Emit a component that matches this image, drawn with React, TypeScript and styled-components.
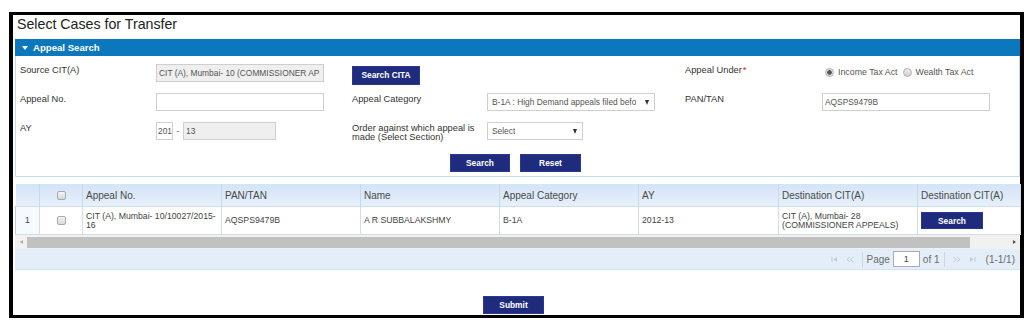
import React from "react";
import styled, { createGlobalStyle } from "styled-components";

const GlobalStyle = createGlobalStyle`
  html, body {
    margin: 0;
    padding: 0;
    background: #fff;
  }
  body {
    font-family: "Liberation Sans", Arial, sans-serif;
  }
`;

const Frame = styled.div`
  box-sizing: border-box;
  margin: 12px 0 0 9px;
  width: 1015px;
  height: 306px;
  border: solid #000;
  border-width: 3px 4px;
  padding-left: 2px;
  display: flex;
  flex-direction: column;
`;

const Title = styled.h1`
  box-sizing: border-box;
  margin: 0;
  height: 24px;
  padding: 1px 0 0 2px;
  font-size: 14.2px;
  line-height: 16px;
  font-weight: normal;
  color: #222;
`;

const Panel = styled.section`
  display: flex;
  flex-direction: column;
`;

const PanelHeader = styled.div`
  height: 17px;
  background: #0b78bd;
  display: flex;
  align-items: center;
  gap: 5px;
  padding-left: 7px;
  color: #fff;
  font-size: 9.6px;
  font-weight: bold;
`;

const Caret = styled.span`
  width: 0;
  height: 0;
  border-left: 3.5px solid transparent;
  border-right: 3.5px solid transparent;
  border-top: 4px solid #fff;
`;

const PanelBody = styled.div`
  border: 1px solid #c3d9ee;
  border-top: none;
  padding: 8px 4px 4px;
`;

const FormGrid = styled.div`
  display: grid;
  grid-template-columns: 136px 196px 135px 198px 137px 1fr;
  grid-auto-rows: 18px;
  row-gap: 11px;
  align-items: start;
`;

const Label = styled.div`
  padding-top: 2px;
  font-size: 9.3px;
  line-height: 9px;
  color: #333;
`;

const Req = styled.span`
  color: #d42020;
  margin-left: 1px;
`;

const Field = styled.div<{ $w: number; $disabled?: boolean }>`
  box-sizing: border-box;
  width: ${(p) => p.$w}px;
  height: 18px;
  border: 1px solid #cfcfcf;
  background: ${(p) => (p.$disabled ? "#efefef" : "#fff")};
  padding: 0 0 0 2px;
  font-size: 8.4px;
  line-height: 16px;
  color: #555;
  white-space: nowrap;
  overflow: hidden;
`;

const YearField = styled(Field)`
  padding-left: 1px;
`;

const SelectBox = styled(Field)`
  display: flex;
  align-items: center;
  justify-content: space-between;
  gap: 4px;
  padding: 0 4px;
`;

const SelectText = styled.span`
  overflow: hidden;
`;

const Arrow = styled.span`
  flex: none;
  width: 0;
  height: 0;
  border-left: 2.5px solid transparent;
  border-right: 2.5px solid transparent;
  border-top: 5px solid #333;
  margin-right: 1px;
`;

const YearPair = styled.div`
  display: flex;
  align-items: center;
  font-size: 9px;
  color: #555;
`;

const Dash = styled.span`
  width: 10px;
  text-align: center;
`;

const Button = styled.button<{ $w: number; $h?: number }>`
  box-sizing: border-box;
  width: ${(p) => p.$w}px;
  height: ${(p) => p.$h ?? 18}px;
  padding: 0;
  border: 1px solid #2c3a8e;
  background: #1f2c7d;
  color: #fff;
  font-family: "Liberation Sans", Arial, sans-serif;
  font-size: 8.4px;
  font-weight: bold;
  cursor: pointer;
`;

const CitaButton = styled(Button)`
  margin-top: 1px;
`;

const RadioGroup = styled.div`
  display: flex;
  align-items: center;
  padding: 3px 0 0 3px;
  font-size: 8.8px;
  color: #555;
`;

const RadioItem = styled.label`
  display: flex;
  align-items: center;
  gap: 4px;
  margin-right: 5px;
`;

const RadioDot = styled.span<{ $on?: boolean }>`
  box-sizing: border-box;
  width: 9px;
  height: 9px;
  border-radius: 50%;
  border: 1px solid #b0b0b0;
  background: ${(p) =>
    p.$on
      ? "radial-gradient(circle, #555 0 2px, #ddd 2.5px)"
      : "linear-gradient(#eee, #d0d0d0)"};
`;

const ButtonRow = styled.div`
  display: flex;
  justify-content: center;
  gap: 10px;
  margin-top: 14px;
  padding-right: 4px;
`;

const GridTable = styled.table`
  margin-top: 7px;
  width: 1005px;
  table-layout: fixed;
  border-collapse: collapse;
  font-size: 8.7px;
  color: #444;
`;

const Col = styled.col<{ $w: number }>`
  width: ${(p) => p.$w}px;
`;

const HeadCell = styled.th`
  height: 22px;
  padding: 0 3px;
  background: linear-gradient(#d3e4f6, #e6f0fb);
  border-right: 1px solid #c6d9ee;
  font-size: 10px;
  font-weight: normal;
  color: #4a4a4a;
  text-align: left;
  white-space: nowrap;
  overflow: hidden;
`;

const CenterHead = styled(HeadCell)`
  text-align: center;
  padding: 0;
`;

const Cell = styled.td`
  height: 27px;
  padding: 0 3px;
  border: 1px solid #d3dde8;
  line-height: 8.5px;
  vertical-align: middle;
  overflow: hidden;
`;

const NumCell = styled(Cell)`
  text-align: center;
  background: #f6f9fd;
  border-left-color: #b9cfe6;
`;

const CenterCell = styled(Cell)`
  text-align: center;
`;

const Check = styled.span`
  display: inline-block;
  box-sizing: border-box;
  width: 9px;
  height: 9px;
  border: 1px solid #aaa;
  border-radius: 2px;
  background: linear-gradient(#f4f4f4, #d8d8d8);
  vertical-align: middle;
`;

const ScrollBar = styled.div`
  width: 1005px;
  height: 14px;
  background: #f1f1f1;
  display: flex;
  align-items: center;
`;

const ScrollArrow = styled.span<{ $left?: boolean }>`
  width: 12px;
  display: flex;
  justify-content: center;
  &::before {
    content: "";
    border-top: 2.5px solid transparent;
    border-bottom: 2.5px solid transparent;
    ${(p) =>
      p.$left ? "border-right: 3px solid #aaa;" : "border-left: 3px solid #555;"}
  }
`;

const Thumb = styled.span`
  width: 943px;
  height: 11px;
  background: #c1c1c1;
`;

const Track = styled.span`
  flex: 1;
`;

const Pager = styled.div`
  box-sizing: border-box;
  width: 1005px;
  height: 21px;
  background: #e3eef9;
  border-bottom: 1px solid #d2e2f2;
  display: flex;
  justify-content: flex-end;
  align-items: center;
  padding-right: 5px;
  font-size: 10px;
  color: #6a6a6a;
`;

const PagerIcon = styled.svg`
  margin: 0 4px;
`;

const Sep = styled.span`
  width: 1px;
  height: 15px;
  background: #c9d8e8;
  margin: 0 4px;
`;

const PageInput = styled.span`
  box-sizing: border-box;
  width: 27px;
  height: 16px;
  margin: 0 3px;
  border: 1px solid #aab;
  background: #fff;
  text-align: center;
  line-height: 14px;
  font-size: 9px;
  color: #444;
`;

const Total = styled.span`
  margin-left: 6px;
`;

const SubmitRow = styled.div`
  display: flex;
  justify-content: center;
  margin-top: 26px;
  padding-right: 8px;
`;

const First = () => (
  <PagerIcon width="7" height="7" viewBox="0 0 7 7">
    <rect x="0.5" y="1" width="1" height="5" fill="#c3cbd6" />
    <path d="M6 1 L2.5 3.5 L6 6 Z" fill="#c3cbd6" />
  </PagerIcon>
);

const Prev = () => (
  <PagerIcon width="8" height="7" viewBox="0 0 8 7">
    <path d="M4 1 L1 3.5 L4 6 M7.5 1 L4.5 3.5 L7.5 6" stroke="#c3cbd6" fill="none" />
  </PagerIcon>
);

const Next = () => (
  <PagerIcon width="8" height="7" viewBox="0 0 8 7">
    <path d="M0.5 1 L3.5 3.5 L0.5 6 M4 1 L7 3.5 L4 6" stroke="#c3cbd6" fill="none" />
  </PagerIcon>
);

const Last = () => (
  <PagerIcon width="7" height="7" viewBox="0 0 7 7">
    <path d="M1 1 L4.5 3.5 L1 6 Z" fill="#c3cbd6" />
    <rect x="5.5" y="1" width="1" height="5" fill="#c3cbd6" />
  </PagerIcon>
);

const columns = [24, 43, 139, 139, 139, 139, 140, 139, 103];

export default function App() {
  return (
    <>
      <GlobalStyle />
      <Frame>
        <Title>Select Cases for Transfer</Title>
        <Panel>
          <PanelHeader>
            <Caret />
            Appeal Search
          </PanelHeader>
          <PanelBody>
            <FormGrid>
              <Label>Source CIT(A)</Label>
              <Field $w={168} $disabled>
                CIT (A), Mumbai- 10 (COMMISSIONER AP
              </Field>
              <div>
                <CitaButton $w={68} $h={19}>
                  Search CITA
                </CitaButton>
              </div>
              <div />
              <Label>
                Appeal Under<Req>*</Req>
              </Label>
              <RadioGroup>
                <RadioItem>
                  <RadioDot $on />
                  Income Tax Act
                </RadioItem>
                <RadioItem>
                  <RadioDot />
                  Wealth Tax Act
                </RadioItem>
              </RadioGroup>

              <Label>Appeal No.</Label>
              <Field $w={168} />
              <Label>Appeal Category</Label>
              <SelectBox $w={168}>
                <SelectText>B-1A : High Demand appeals filed befo</SelectText>
                <Arrow />
              </SelectBox>
              <Label>PAN/TAN</Label>
              <Field $w={168}>AQSPS9479B</Field>

              <Label>AY</Label>
              <YearPair>
                <YearField $w={17}>201</YearField>
                <Dash>-</Dash>
                <Field $w={93} $disabled>
                  13
                </Field>
              </YearPair>
              <Label>Order against which appeal is made (Select Section)</Label>
              <SelectBox $w={96}>
                <SelectText>Select</SelectText>
                <Arrow />
              </SelectBox>
            </FormGrid>
            <ButtonRow>
              <Button $w={60}>Search</Button>
              <Button $w={61}>Reset</Button>
            </ButtonRow>
          </PanelBody>
        </Panel>

        <GridTable>
          <colgroup>
            {columns.map((w, i) => (
              <Col key={i} $w={w} />
            ))}
          </colgroup>
          <thead>
            <tr>
              <CenterHead />
              <CenterHead>
                <Check />
              </CenterHead>
              <HeadCell>Appeal No.</HeadCell>
              <HeadCell>PAN/TAN</HeadCell>
              <HeadCell>Name</HeadCell>
              <HeadCell>Appeal Category</HeadCell>
              <HeadCell>AY</HeadCell>
              <HeadCell>Destination CIT(A)</HeadCell>
              <HeadCell>Destination CIT(A)</HeadCell>
            </tr>
          </thead>
          <tbody>
            <tr>
              <NumCell>1</NumCell>
              <CenterCell>
                <Check />
              </CenterCell>
              <Cell>CIT (A), Mumbai- 10/10027/2015-16</Cell>
              <Cell>AQSPS9479B</Cell>
              <Cell>A R SUBBALAKSHMY</Cell>
              <Cell>B-1A</Cell>
              <Cell>2012-13</Cell>
              <Cell>
                CIT (A), Mumbai- 28
                <br />
                (COMMISSIONER APPEALS)
              </Cell>
              <Cell>
                <Button $w={62} $h={17}>
                  Search
                </Button>
              </Cell>
            </tr>
          </tbody>
        </GridTable>
        <ScrollBar>
          <ScrollArrow $left />
          <Thumb />
          <Track />
          <ScrollArrow />
        </ScrollBar>
        <Pager>
          <First />
          <Prev />
          <Sep />
          Page
          <PageInput>1</PageInput>
          of 1
          <Sep />
          <Next />
          <Last />
          <Total>(1-1/1)</Total>
        </Pager>

        <SubmitRow>
          <Button $w={61}>Submit</Button>
        </SubmitRow>
      </Frame>
    </>
  );
}
